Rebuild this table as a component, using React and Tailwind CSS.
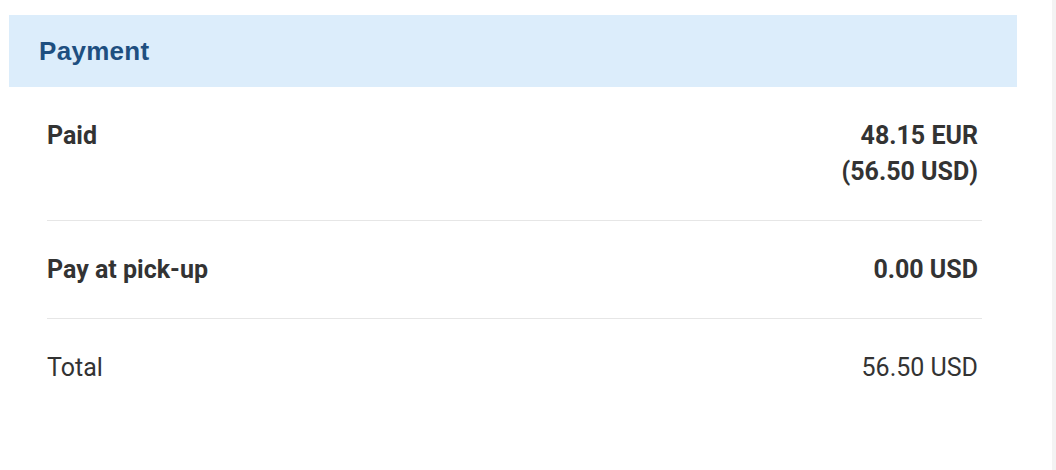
import React from 'react';

const rows = [
  { label: 'Paid', value: ['48.15 EUR', '(56.50 USD)'], bold: true },
  { label: 'Pay at pick-up', value: ['0.00 USD'], bold: true },
  { label: 'Total', value: ['56.50 USD'], bold: false },
];

const PaymentSummary = () => {
  return (
    <div className="bg-white h-[470px] w-full flex font-['Roboto',sans-serif] text-[#333333]">
      <div className="flex-1 pt-[15px] pl-[9px]">
        {/* Section header */}
        <div className="w-[1008px] h-[72px] bg-[#dcedfb] flex items-center px-[30px]">
          <h2 className="text-[26px] font-bold tracking-[0.3px] text-[#1e4f80] font-['Liberation_Sans',Arial,sans-serif]">
            Payment
          </h2>
        </div>

        {/* Rows */}
        <div className="ml-[38px] w-[935px]">
          {rows.map((row, i) => (
            <div
              key={row.label}
              className={`flex justify-between pt-[31px] pb-[30px] text-[25px] leading-[36px] ${
                i < rows.length - 1 ? 'border-b border-[#e6e6e6]' : ''
              } ${row.bold ? 'font-bold' : 'font-normal'}`}
            >
              <span>{row.label}</span>
              <div className="text-right pr-[4px]">
                {row.value.map((v) => (
                  <div key={v}>{v}</div>
                ))}
              </div>
            </div>
          ))}
        </div>
      </div>
      <div className="w-[4px] bg-[#f3f3f3]"></div>
    </div>
  );
};

export default PaymentSummary;
